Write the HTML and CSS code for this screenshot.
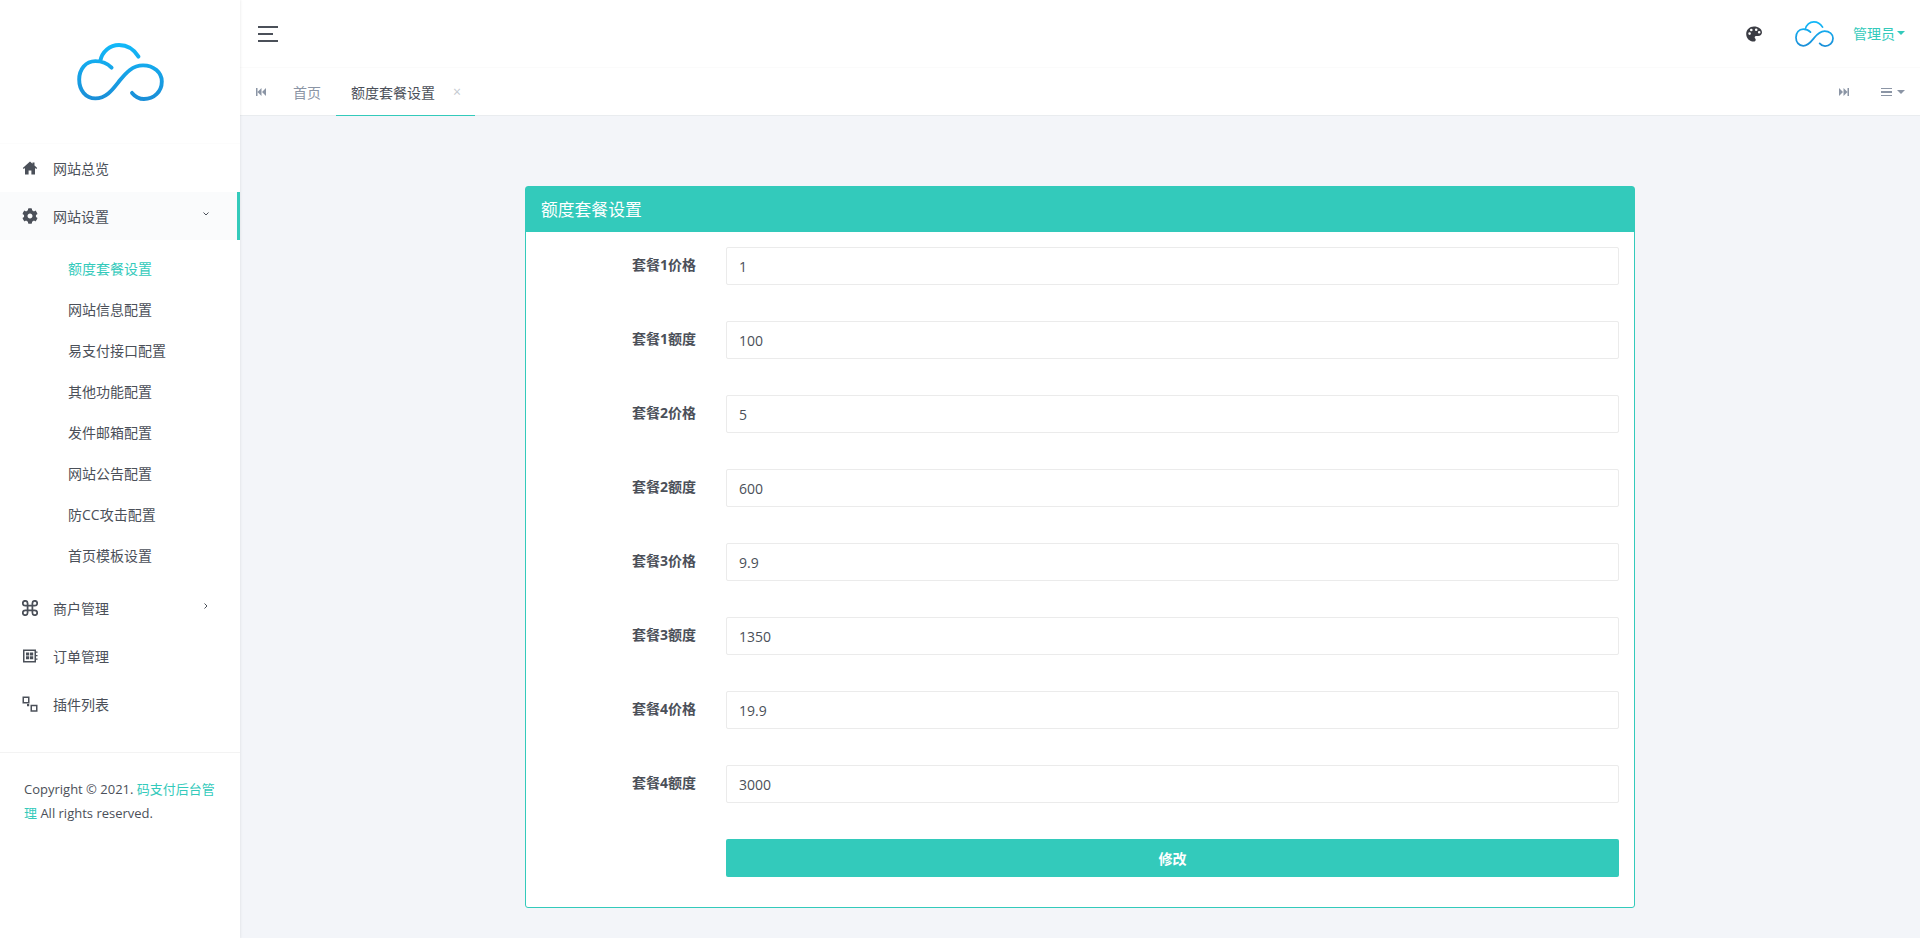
FILE: index.html
```html
<!DOCTYPE html>
<html lang="zh-CN">

<head>
    <meta charset="UTF-8" />
    <meta name="viewport" content="width=device-width, initial-scale=1.0" />
    <title>额度套餐设置</title>
    <link rel="stylesheet" href="styles.css">
</head>

<body>
    <svg class="defs" width="0" height="0">
        <defs>
            <linearGradient id="cloud-blue" x1="0" y1="0" x2="0" y2="1">
                <stop offset="0" stop-color="#12b8f8" />
                <stop offset="1" stop-color="#1a8fd8" />
            </linearGradient>
            <symbol id="cloud" viewBox="79 34 267 179">
                <path fill="none" stroke="url(#cloud-blue)" stroke-width="12" stroke-linecap="round"
                    d="M185 110C170 95 155 90 135 90C105 90 85 115 85 147C85 180 105 205 135 205C170 205 190 175 210 150C230 125 250 103 282 103C315 103 340 125 340 153C340 185 315 207 285 207C270 207 258 200 248 188M150 90C155 60 180 40 208 40C235 40 255 55 268 76" />
            </symbol>
        </defs>
    </svg>

    <aside class="sidebar">
        <div class="logo">
            <svg class="logo-img"><use href="#cloud" /></svg>
        </div>

        <ul class="menu">
            <li class="menu-item">
                <svg class="menu-icon" viewBox="0 0 16 16"><path d="M8 1.500L.8 8l.9 1 1.300-1.100V14.500h3.600v-4h2.800v4H13V7.900L14.300 9l.9-1-2.700-2.400V2.500h-2v1.300z" /></svg>
                <span>网站总览</span>
            </li>
            <li class="menu-item active">
                <svg class="menu-icon" viewBox="0 0 512 512"><path d="M487.4 315.7l-42.6-24.6c4.3-23.2 4.3-47 0-70.2l42.6-24.6c4.9-2.8 7.1-8.6 5.5-14-11.1-35.6-30-67.8-54.7-94.6-3.8-4.1-10-5.1-14.8-2.3L380.8 110c-17.9-15.4-38.5-27.3-60.8-35.1V25.8c0-5.6-3.9-10.5-9.4-11.7-36.7-8.2-74.3-7.8-109.2 0-5.5 1.2-9.4 6.1-9.4 11.7V75c-22.2 7.9-42.8 19.8-60.8 35.1L88.7 85.5c-4.9-2.8-11-1.9-14.8 2.3-24.7 26.7-43.6 58.9-54.7 94.6-1.7 5.4.6 11.2 5.5 14L67.3 221c-4.3 23.2-4.3 47 0 70.2l-42.6 24.6c-4.9 2.8-7.1 8.6-5.5 14 11.1 35.6 30 67.8 54.7 94.6 3.8 4.1 10 5.1 14.8 2.3l42.6-24.6c17.9 15.4 38.5 27.3 60.8 35.1v49.2c0 5.6 3.9 10.5 9.4 11.7 36.7 8.2 74.3 7.8 109.2 0 5.5-1.2 9.4-6.1 9.4-11.7v-49.2c22.2-7.9 42.8-19.8 60.8-35.1l42.6 24.6c4.9 2.8 11 1.9 14.8-2.3 24.7-26.7 43.6-58.9 54.7-94.6 1.5-5.5-.7-11.3-5.6-14.1zM256 336c-44.1 0-80-35.9-80-80s35.9-80 80-80 80 35.9 80 80-35.9 80-80 80z" /></svg>
                <span>网站设置</span>
                <svg class="menu-arrow" viewBox="0 0 8 8"><path d="M1.500 2.500L4 5l2.500-2.500" /></svg>
            </li>
            <li>
                <ul class="submenu">
                    <li class="current">额度套餐设置</li>
                    <li>网站信息配置</li>
                    <li>易支付接口配置</li>
                    <li>其他功能配置</li>
                    <li>发件邮箱配置</li>
                    <li>网站公告配置</li>
                    <li>防CC攻击配置</li>
                    <li>首页模板设置</li>
                </ul>
            </li>
            <li class="menu-item">
                <svg class="menu-icon line" viewBox="2 2 20 20"><path d="M18 3a3 3 0 0 0-3 3v12a3 3 0 0 0 3 3 3 3 0 0 0 3-3 3 3 0 0 0-3-3H6a3 3 0 0 0-3 3 3 3 0 0 0 3 3 3 3 0 0 0 3-3V6a3 3 0 0 0-3-3 3 3 0 0 0-3 3 3 3 0 0 0 3 3h12a3 3 0 0 0 3-3 3 3 0 0 0-3-3z" /></svg>
                <span>商户管理</span>
                <svg class="menu-arrow" viewBox="0 0 8 8"><path d="M2.500 1.500L5 4 2.500 6.500" /></svg>
            </li>
            <li class="menu-item">
                <svg class="menu-icon" viewBox="0 0 16 16"><path fill-rule="evenodd" d="M1 1.500h13v13H1zM2.500 3v10h10V3zM4 4.500h3.200v3H4zM8 4.500h3.200v3H8zM4 8.300h3.200v3H4zM8 8.300h3.200v3H8zM14 3.500h1.500v1.200H14zM14 7h1.500v1.200H14zM14 10.500h1.500v1.200H14z" /></svg>
                <span>订单管理</span>
            </li>
            <li class="menu-item">
                <svg class="menu-icon" viewBox="0 0 16 16"><path fill-rule="evenodd" d="M.5.500H7.500V7.500H.5zM2 2V6H6V2zM8.500 8.800H15.500V15.800H8.500zM10 10.300v4h4v-4zM5 8h2.200v2.200H5z" /></svg>
                <span>插件列表</span>
            </li>
        </ul>

        <div class="copyright">
            Copyright © 2021. <a href="#">码支付后台管理</a> All rights reserved.
        </div>
    </aside>

    <div class="page">
        <header class="topbar">
            <div class="hamburger"><i></i><i></i><i></i></div>
            <div class="top-right">
                <svg class="palette" viewBox="0 0 16 16"><path fill-rule="evenodd" d="M8 .4C3.600.4.200 3.700.200 8c0 4.300 3.400 7.600 7.500 7.600 1.300 0 2-.8 2-1.800 0-.5-.2-.9-.5-1.300-.3-.4-.5-.7-.5-1.100 0-.8.7-1.400 1.500-1.400h1.900c2.300 0 3.900-1.500 3.900-3.700C16 2.900 12.400.4 8 .4zM3.600 8.900a1.300 1.300 0 1 1 0-2.600 1.300 1.300 0 0 1 0 2.600zm1.700-3.600a1.300 1.300 0 1 1 0-2.600 1.300 1.300 0 0 1 0 2.600zm4.900-.2a1.300 1.300 0 1 1 0-2.600 1.300 1.300 0 0 1 0 2.600zm3 2.400a1.300 1.300 0 1 1 0-2.600 1.300 1.300 0 0 1 0 2.600z" /></svg>
                <svg class="avatar"><use href="#cloud" /></svg>
                <span class="user">管理员<i class="caret"></i></span>
            </div>
        </header>

        <nav class="tabbar">
            <svg class="tab-nav" viewBox="0 0 10 8"><path d="M0 0h1.500v8H0zM5.500 0v8L1.500 4zM10 0v8L6 4z" /></svg>
            <div class="tabs">
                <span class="tab">首页</span>
                <span class="tab selected">额度套餐设置<em>×</em></span>
            </div>
            <div class="tab-tools">
                <svg class="tab-nav" viewBox="0 0 10 8"><path d="M10 0H8.500v8H10zM4.500 0v8l4-4zM0 0v8l4-4z" /></svg>
                <span class="tab-menu"><i></i><i class="caret"></i></span>
            </div>
        </nav>

        <main class="content">
            <section class="card">
                <div class="card-title">额度套餐设置</div>
                <form class="card-body">
                    <div class="form-row"><label>套餐1价格</label><input type="text" value="1"></div>
                    <div class="form-row"><label>套餐1额度</label><input type="text" value="100"></div>
                    <div class="form-row"><label>套餐2价格</label><input type="text" value="5"></div>
                    <div class="form-row"><label>套餐2额度</label><input type="text" value="600"></div>
                    <div class="form-row"><label>套餐3价格</label><input type="text" value="9.9"></div>
                    <div class="form-row"><label>套餐3额度</label><input type="text" value="1350"></div>
                    <div class="form-row"><label>套餐4价格</label><input type="text" value="19.9"></div>
                    <div class="form-row"><label>套餐4额度</label><input type="text" value="3000"></div>
                    <div class="form-row last"><span></span><button type="button">修改</button></div>
                </form>
            </section>
        </main>
    </div>
</body>

</html>
```

FILE: styles.css
```css
body {
    font-family: 'Open Sans', 'Noto Sans CJK SC', sans-serif;
    font-size: 14px;
    color: #4b5059;
    background-color: #f3f5f9;
    display: flex;
    margin: 0;
    height: 938px;
    overflow: hidden;
}

.defs {
    position: absolute;
}

.sidebar {
    width: 240px;
    flex-shrink: 0;
    background-color: #fff;
    box-shadow: 1px 0 2px rgba(0, 0, 0, 0.06);
    z-index: 1;
}

.logo {
    height: 144px;
    display: flex;
    justify-content: center;
    align-items: center;
    border-bottom: 1px solid #fcfcfc;
    box-sizing: border-box;
}

.logo-img {
    width: 87px;
    height: 58px;
}

.menu,
.submenu {
    list-style: none;
    margin: 0;
    padding: 0;
}

.menu-item {
    height: 48px;
    display: flex;
    align-items: center;
    padding: 0 30px 0 22px;
    box-sizing: border-box;
}

.menu-item.active {
    background-color: #fafbfc;
    border-right: 3px solid #33cabb;
    padding-right: 27px;
}

.menu-icon {
    width: 16px;
    height: 16px;
    margin-right: 15px;
    fill: #4b5059;
    flex-shrink: 0;
}

.menu-icon.line {
    fill: none;
    stroke: #4b5059;
    stroke-width: 2.2;
}

.menu-arrow {
    width: 8px;
    height: 8px;
    margin-left: auto;
    margin-top: -4px;
    fill: none;
    stroke: #4b5059;
    stroke-width: 1;
}

.submenu {
    padding: 8px 0;
}

.submenu li {
    height: 41px;
    line-height: 41px;
    padding-left: 68px;
}

.submenu .current {
    color: #33cabb;
}

.copyright {
    border-top: 1px solid #f3f3f3;
    margin-top: 24px;
    padding: 24px 24px 0;
    font-size: 13px;
    line-height: 24px;
}

.copyright a {
    color: #33cabb;
    text-decoration: none;
}

.page {
    flex: 1;
    display: flex;
    flex-direction: column;
    min-width: 0;
}

.topbar {
    height: 68px;
    background-color: #fff;
    display: flex;
    justify-content: space-between;
    align-items: center;
    padding: 0 15px 0 18px;
    border-bottom: 1px solid #fbfbfb;
    box-sizing: border-box;
}

.hamburger {
    width: 20px;
}

.hamburger i {
    display: block;
    height: 2px;
    background-color: #4b5059;
    margin-bottom: 5px;
}

.hamburger i:nth-child(2) {
    width: 15px;
}

.hamburger i:last-child {
    margin-bottom: 0;
}

.top-right {
    display: flex;
    align-items: center;
}

.palette {
    width: 16px;
    height: 16px;
    fill: #3b3d44;
    margin-right: 33px;
}

.avatar {
    width: 39px;
    height: 26px;
    margin-right: 19px;
}

.user {
    color: #33cabb;
    display: flex;
    align-items: center;
    margin-top: -2px;
}

.caret {
    display: inline-block;
    width: 0;
    height: 0;
    border-left: 4px solid transparent;
    border-right: 4px solid transparent;
    border-top: 4px solid currentColor;
    margin-left: 2px;
}

.tabbar {
    height: 48px;
    background-color: #fff;
    display: flex;
    align-items: center;
    padding: 0 15px 0 16px;
    border-bottom: 1px solid #e9ecef;
    box-sizing: border-box;
}

.tab-nav {
    width: 10px;
    height: 8px;
    fill: #8b95a5;
}

.tabs {
    flex: 1;
    display: flex;
    align-self: stretch;
    margin-left: 12px;
}

.tab {
    display: flex;
    align-items: center;
    padding: 0 15px;
    margin-bottom: -1px;
    color: #8b95a5;
    white-space: nowrap;
}

.tab.selected {
    color: #4b5059;
    border-bottom: 1px solid #33cabb;
    height: 48px;
    box-sizing: border-box;
    width: 139px;
}

.tab em {
    font-style: normal;
    font-size: 14px;
    color: #c4c9d0;
    margin-left: 18px;
}

.tab-tools {
    display: flex;
    align-items: center;
}

.tab-menu {
    display: flex;
    align-items: center;
    margin-left: 32px;
    color: #8b95a5;
}

.tab-menu .caret {
    margin-left: 5px;
}

.tab-menu i:first-child {
    display: block;
    width: 11px;
    height: 8px;
    box-sizing: border-box;
    border-top: 1.5px solid #8b95a5;
    border-bottom: 1.5px solid #8b95a5;
    background: linear-gradient(#8b95a5, #8b95a5) center / 100% 2px no-repeat;
}

.content {
    flex: 1;
    padding: 70px 45px 0;
}

.card {
    width: 1110px;
    margin: 0 auto;
    background-color: #fff;
    border: 1px solid #33cabb;
    border-radius: 3px;
    box-sizing: border-box;
}

.card-title {
    height: 45px;
    line-height: 45px;
    padding-left: 15px;
    background-color: #33cabb;
    color: #fff;
    font-size: 16.8px;
}

.card-body {
    padding: 15px 15px 30px;
}

.form-row {
    display: grid;
    grid-template-columns: 155px 1fr;
    column-gap: 30px;
    margin-bottom: 36px;
}

.form-row.last {
    margin-bottom: 0;
}

.form-row label {
    text-align: right;
    font-weight: 700;
    line-height: 35px;
}

.form-row input {
    height: 38px;
    padding: 5px 12px;
    border: 1px solid #ebebeb;
    border-radius: 2px;
    font-family: inherit;
    font-size: 14px;
    color: #4b5059;
    box-sizing: border-box;
    width: 100%;
    outline: none;
}

.form-row button {
    height: 38px;
    border: none;
    border-radius: 2px;
    background-color: #33cabb;
    color: #fff;
    font-family: inherit;
    font-size: 14px;
    font-weight: 700;
}
```
